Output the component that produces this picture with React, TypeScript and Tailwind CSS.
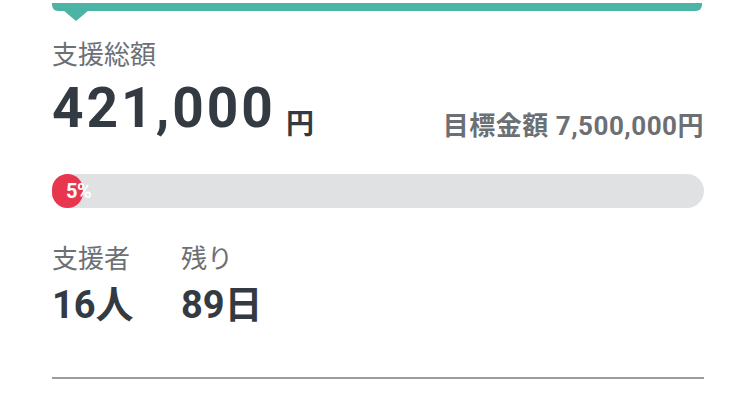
import React from "react";

export default function App() {
  const font = { fontFamily: "Roboto, 'Noto Sans CJK JP', sans-serif" };
  return (
    <div className="w-[736px] h-[414px] bg-white overflow-hidden" style={font}>
      <div className="pl-[52px] pr-[32px]">
        {/* teal top bar with pointer */}
        <div className="relative pt-[3px] pr-[2px]">
          <div className="h-[8px] bg-[#4bb4a4] rounded-b-[6px]" />
          <svg className="absolute left-[11px] top-[10px]" width="26" height="12" viewBox="0 0 26 12">
            <polygon points="0,0 26,0 13,11" fill="#4bb4a4" />
          </svg>
        </div>

        <div className="mt-[31px] text-[26px] leading-none text-[#6c6f73]">支援総額</div>

        <div className="mt-[13px] flex items-end justify-between">
          <div className="flex items-baseline">
            <span className="text-[55px] leading-none font-bold text-[#343a42] tracking-[3px]">421,000</span>
            <span className="relative top-[7px] ml-[10px] text-[28px] leading-none font-bold text-[#343a42]">円</span>
          </div>
          <div className="text-[26px] leading-none font-bold text-[#6c6f73] tracking-[0.5px] mb-[-3px]">目標金額 7,500,000円</div>
        </div>

        <div className="mt-[38px] relative h-[34px] rounded-full bg-[#e0e1e3]">
          <div className="h-[34px] w-[31px] rounded-full bg-[#e8364f]" />
          <span className="absolute left-[14px] top-0 h-[34px] flex items-center text-[20px] font-bold text-white tracking-[-0.5px]">5%</span>
        </div>

        <div className="mt-[38px] flex">
          <div className="w-[129px]">
            <div className="text-[26px] leading-none text-[#6c6f73]">支援者</div>
            <div className="mt-[14px] text-[38px] leading-none font-bold text-[#343a42]">16人</div>
          </div>
          <div>
            <div className="text-[26px] leading-none text-[#6c6f73]">残り</div>
            <div className="mt-[14px] text-[38px] leading-none font-bold text-[#343a42]">89日</div>
          </div>
        </div>

        <div className="mt-[53px] h-[2px] bg-[#9c9c9c]" />
      </div>
    </div>
  );
}
